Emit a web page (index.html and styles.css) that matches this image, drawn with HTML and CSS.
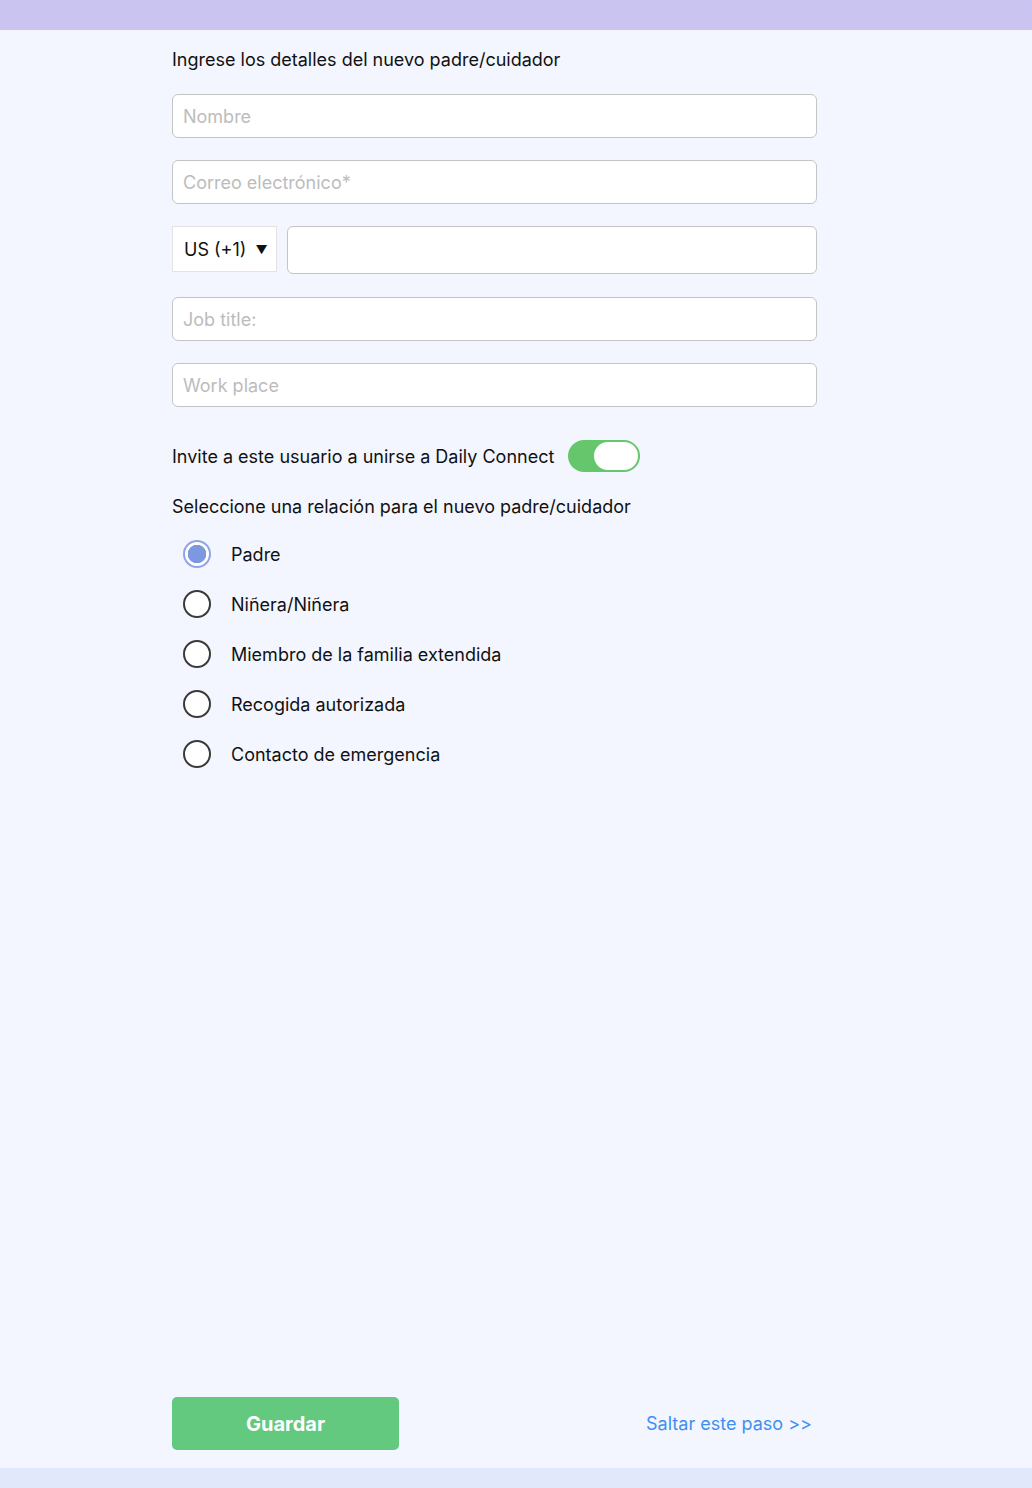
FILE: index.html
```html
<!DOCTYPE html>
<html lang="es">
<head>
<meta charset="utf-8">
<link rel="stylesheet" href="styles.css">
</head>
<body>
<div class="topbar"></div>
<main class="main">
  <div class="form">
    <p class="heading">Ingrese los detalles del nuevo padre/cuidador</p>
    <input class="field" type="text" placeholder="Nombre">
    <input class="field" type="text" placeholder="Correo electrónico*">
    <div class="phone-row">
      <div class="country">US (+1) <span class="caret">▼</span></div>
      <input class="field phone" type="text">
    </div>
    <input class="field" type="text" placeholder="Job title:">
    <input class="field" type="text" placeholder="Work place">
    <div class="invite-row">
      <span class="label">Invite a este usuario a unirse a Daily Connect</span>
      <span class="toggle"><span class="knob"></span></span>
    </div>
    <p class="label rel-title">Seleccione una relación para el nuevo padre/cuidador</p>
    <ul class="radios">
      <li class="radio-row"><span class="radio checked"></span><span class="label">Padre</span></li>
      <li class="radio-row"><span class="radio"></span><span class="label">Niñera/Niñera</span></li>
      <li class="radio-row"><span class="radio"></span><span class="label">Miembro de la familia extendida</span></li>
      <li class="radio-row"><span class="radio"></span><span class="label">Recogida autorizada</span></li>
      <li class="radio-row"><span class="radio"></span><span class="label">Contacto de emergencia</span></li>
    </ul>
  </div>
  <div class="actions">
    <button class="save">Guardar</button>
    <a class="skip" href="#">Saltar este paso &gt;&gt;</a>
  </div>
</main>
<div class="bottombar"></div>
</body>
</html>
```
FILE: styles.css
```css
* { box-sizing: border-box; }
html, body { margin: 0; padding: 0; }
body {
  height: 1488px;
  display: flex;
  flex-direction: column;
  background: #f3f6fe;
  font-family: Inter, "Noto Sans", sans-serif;
  color: #111;
}
.topbar {
  height: 30px;
  background: linear-gradient(#c9c5f2, #cdc3f1);
  flex: none;
}
.bottombar {
  height: 20px;
  background: #e2e8fb;
  flex: none;
}
.main {
  flex: 1;
  display: flex;
  flex-direction: column;
  justify-content: space-between;
  width: 645px;
  margin-left: 172px;
}
.form {
  display: flex;
  flex-direction: column;
}
.heading {
  margin: 18px 0 23px;
  font-size: 18px;
  line-height: 23px;
}
.label {
  font-size: 18px;
  line-height: 23px;
}
.field {
  height: 44px;
  width: 100%;
  margin: 0 0 22px;
  border: 1px solid #c4c4c4;
  border-radius: 6px;
  background: #fff;
  padding: 0 10px;
  font-family: inherit;
  font-size: 18px;
  color: #111;
  outline: none;
}
.field::placeholder { color: #bcbcbc; }
.phone-row {
  display: flex;
  align-items: flex-start;
  gap: 10px;
  margin-bottom: 23px;
}
.country {
  width: 105px;
  height: 46px;
  flex: none;
  background: #fff;
  border: 1px solid #e3e3e3;
  display: flex;
  align-items: center;
  padding-left: 11px;
  font-size: 18px;
  gap: 9px;
}
.caret { font-size: 12px; }
.field.phone {
  height: 48px;
  margin: 0;
  flex: 1;
}
.invite-row {
  display: flex;
  align-items: center;
  gap: 14px;
  margin-top: 11px;
  height: 32px;
}
.toggle {
  width: 72px;
  height: 32px;
  border-radius: 16px;
  background: #66c66b;
  display: flex;
  align-items: center;
  justify-content: flex-end;
  padding: 2px;
}
.knob {
  width: 44px;
  height: 28px;
  border-radius: 14px;
  background: #fff;
}
.rel-title { margin: 23px 0 11px; }
.radios {
  list-style: none;
  margin: 0;
  padding: 0 0 0 11px;
}
.radio-row {
  height: 50px;
  display: flex;
  align-items: center;
  gap: 20px;
}
.radio {
  width: 28px;
  height: 28px;
  border-radius: 50%;
  border: 2px solid #3a3a3a;
  background: #fff;
  flex: none;
}
.radio.checked {
  border-color: #8fa5e8;
  background: radial-gradient(circle, #7b98e0 0 9px, #fff 9.5px);
}
.actions {
  display: flex;
  justify-content: space-between;
  align-items: center;
  padding-bottom: 18px;
}
.save {
  width: 227px;
  height: 53px;
  border: none;
  border-radius: 5px;
  background: #62c97e;
  color: #fff;
  font-family: inherit;
  font-size: 20px;
  font-weight: 700;
}
.skip {
  color: #3f8ff3;
  text-decoration: none;
  font-size: 18px;
  margin-right: 5px;
}
```
